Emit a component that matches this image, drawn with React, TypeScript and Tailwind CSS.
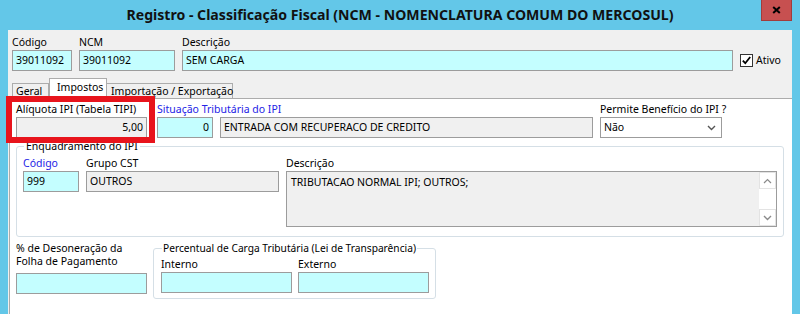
import React from "react";

const inBase =
  "h-[21px] border border-[#9c9c9c] flex items-center px-[3px] text-[10.5px] text-black whitespace-nowrap overflow-hidden";
const cyan = "bg-[#c4feff]";
const gray = "bg-[#f0f0f0]";
const lbl = "h-[16px] leading-[16px] text-[10.5px] text-black whitespace-nowrap";
const blue = "h-[16px] leading-[16px] text-[10.5px] text-[#2323e6] whitespace-nowrap";

function UpChevron() {
  return (
    <svg width="9" height="6" viewBox="0 0 9 6">
      <path d="M1 5 L4.5 1.5 L8 5" fill="none" stroke="#8a8a8a" strokeWidth="1.2" />
    </svg>
  );
}
function DownChevron({ color = "#8a8a8a" }: { color?: string }) {
  return (
    <svg width="9" height="6" viewBox="0 0 9 6">
      <path d="M1 1 L4.5 4.5 L8 1" fill="none" stroke={color} strokeWidth="1.4" />
    </svg>
  );
}

export default function App() {
  return (
    <div className="w-[800px] h-[314px] bg-[#63c7e8] flex flex-col overflow-hidden relative font-['Noto_Sans',sans-serif]">
      {/* Title bar */}
      <div className="h-[30px] shrink-0 flex items-center justify-center relative">
        <span className="text-[14.1px] font-bold text-[#111] leading-none">
          Registro - Classificação Fiscal (NCM - NOMENCLATURA COMUM DO MERCOSUL)
        </span>
        <div className="absolute right-[8px] top-0 w-[31px] h-[21px] bg-[#c75050] border border-t-0 border-[#a23c3c] flex items-center justify-center">
          <svg width="9" height="8" viewBox="0 0 9 8">
            <path d="M1.2 1 L7.8 7 M7.8 1 L1.2 7" stroke="#000" strokeWidth="2" />
          </svg>
        </div>
      </div>

      {/* Client area */}
      <div className="mx-[8px] flex-1 bg-[#f0f0f0] flex flex-col">
        {/* Top row */}
        <div className="flex items-end gap-[7px] pl-[4px] pt-[4px]">
          <div className="flex flex-col w-[60px]">
            <span className={lbl}>Código</span>
            <div className={`${inBase} ${cyan}`}>39011092</div>
          </div>
          <div className="flex flex-col w-[96px]">
            <span className={lbl}>NCM</span>
            <div className={`${inBase} ${cyan}`}>39011092</div>
          </div>
          <div className="flex flex-col w-[551px]">
            <span className={lbl}>Descrição</span>
            <div className={`${inBase} ${cyan}`}>SEM CARGA</div>
          </div>
          <div className="h-[21px] flex items-center gap-[3px]">
            <svg width="13" height="13" viewBox="0 0 13 13">
              <rect x="0.5" y="0.5" width="12" height="12" fill="#fff" stroke="#333" />
              <path d="M2.8 6.6 L5.3 9.2 L10.2 3" fill="none" stroke="#000" strokeWidth="1.8" />
            </svg>
            <span className="text-[10.5px] text-black">Ativo</span>
          </div>
        </div>

        {/* Tabs */}
        <div className="flex items-end pl-[4px] mt-[7px] h-[20px]">
          <div className="w-[37px] h-[15px] border border-b-0 border-[#acacac] bg-[#f0f0f0] text-[10.5px] leading-[14px] pl-[3px] text-black">
            Geral
          </div>
          <div className="relative z-10 -mb-[1px] w-[58px] h-[21px] border border-b-0 border-[#acacac] bg-white text-[10.5px] leading-[17px] pl-[7px] text-black">
            Impostos
          </div>
          <div className="w-[126px] h-[15px] border border-b-0 border-l-0 border-[#acacac] bg-[#f0f0f0] text-[10.5px] leading-[14px] pl-[4px] text-black whitespace-nowrap">
            Importação / Exportação
          </div>
        </div>

        {/* Panel */}
        <div className="flex-1 ml-[1px] bg-white border-t border-l border-[#acacac] relative pl-[6px] pt-[2px]">
          {/* red highlight */}
          <div className="absolute left-[-4px] top-[-3px] w-[149px] h-[47px] border-[6px] border-[#e8141c] z-20 pointer-events-none" />

          <div className="flex items-start">
            <div className="flex flex-col w-[131px]">
              <span className={lbl}>Alíquota IPI (Tabela TIPI)</span>
              <div className={`${inBase} ${gray} justify-end`}>5,00</div>
            </div>
            <div className="flex flex-col ml-[10px]">
              <span className={blue}>Situação Tributária do IPI</span>
              <div className="flex gap-[7px]">
                <div className={`${inBase} ${cyan} w-[56px] justify-end`}>0</div>
                <div className={`${inBase} ${gray} w-[373px]`}>ENTRADA COM RECUPERACO DE CREDITO</div>
              </div>
            </div>
            <div className="flex flex-col ml-[7px] w-[122px]">
              <span className={lbl}>Permite Benefício do IPI ?</span>
              <div className={`${inBase} bg-white justify-between pr-[5px]`}>
                <span>Não</span>
                <DownChevron color="#555" />
              </div>
            </div>
          </div>

          {/* Enquadramento do IPI */}
          <fieldset className="mt-[1px] mr-[8px] border border-[#d5dfe6] rounded-[3px] pl-[6px] pr-[6px] pb-[9px]">
            <legend className="ml-[1px] px-[2px] text-[10.5px] leading-[15px] text-black">Enquadramento do IPI</legend>
            <div className="flex items-start gap-[7px] pt-[1px]">
              <div className="flex flex-col w-[56px]">
                <span className={blue}>Código</span>
                <div className={`${inBase} ${cyan}`}>999</div>
              </div>
              <div className="flex flex-col w-[193px]">
                <span className={lbl}>Grupo CST</span>
                <div className={`${inBase} ${gray}`}>OUTROS</div>
              </div>
              <div className="flex flex-col w-[491px]">
                <span className={lbl}>Descrição</span>
                <div className="h-[56px] border border-[#9c9c9c] bg-[#f0f0f0] flex">
                  <div className="flex-1 px-[4px] pt-[3px] text-[10.5px] leading-[15px] text-black">
                    TRIBUTACAO NORMAL IPI; OUTROS;
                  </div>
                  <div className="w-[17px] bg-white flex flex-col">
                    <div className="h-[17px] border border-[#e3e3e3] flex items-center justify-center">
                      <UpChevron />
                    </div>
                    <div className="flex-1" />
                    <div className="h-[17px] border border-[#e3e3e3] flex items-center justify-center">
                      <DownChevron />
                    </div>
                  </div>
                </div>
              </div>
            </div>
          </fieldset>

          {/* Bottom row */}
          <div className="flex items-start mt-[4px]">
            <div className="flex flex-col w-[131px] pt-[1px]">
              <span className="text-[10.5px] leading-[13px] text-black">% de Desoneração da</span>
              <span className="text-[10.5px] leading-[13px] text-black">Folha de Pagamento</span>
              <div className={`${inBase} ${cyan} mt-[5px] h-[20px]`} />
            </div>
            <fieldset className="ml-[6px] w-[283px] border border-[#d5dfe6] rounded-[3px] pl-[7px] pr-[6px] pb-[5px]">
              <legend className="ml-[1px] px-[1px] text-[10.2px] leading-[15px] text-black whitespace-nowrap">
                Percentual de Carga Tributária (Lei de Transparência)
              </legend>
              <div className="flex gap-[6px]">
                <div className="flex flex-col w-[131px]">
                  <span className={lbl}>Interno</span>
                  <div className={`${inBase} ${cyan} h-[20px]`} />
                </div>
                <div className="flex flex-col w-[131px]">
                  <span className={lbl}>Externo</span>
                  <div className={`${inBase} ${cyan} h-[20px]`} />
                </div>
              </div>
            </fieldset>
          </div>
        </div>
      </div>
    </div>
  );
}
